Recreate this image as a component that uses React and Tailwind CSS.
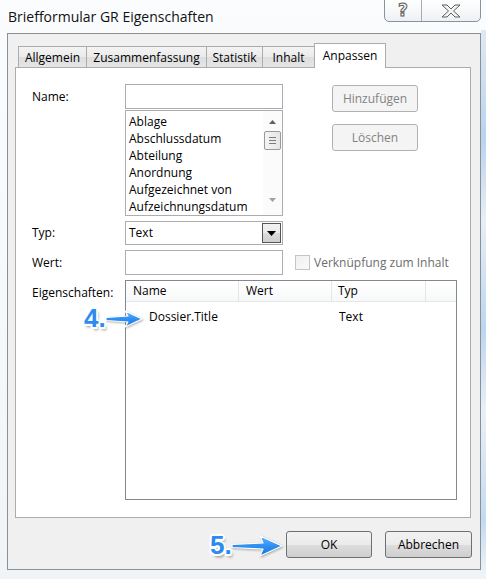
import React from 'react';

const listItems = ['Ablage', 'Abschlussdatum', 'Abteilung', 'Anordnung', 'Aufgezeichnet von', 'Aufzeichnungsdatum'];

const Arrow = ({ w, h, shaft }) => (
  <svg width={w} height={h} viewBox={`0 0 ${w} ${h}`} className="overflow-visible drop-shadow-[1px_1px_1px_rgba(0,0,0,0.3)]">
    <defs>
      <linearGradient id={`ag${w}`} x1="0" y1="0" x2="0" y2="1">
        <stop offset="0" stopColor="#5fb4ff" />
        <stop offset="0.5" stopColor="#2f90f2" />
        <stop offset="1" stopColor="#1673dc" />
      </linearGradient>
    </defs>
    <polygon
      points={`1,${h / 2 - 1.5} ${w - shaft},${h / 2 - 3} ${w - shaft - 3},1 ${w - 1},${h / 2} ${w - shaft - 3},${h - 1} ${w - shaft},${h / 2 + 3} 1,${h / 2 + 1.5}`}
      fill={`url(#ag${w})`}
      stroke="#ffffff"
      strokeWidth="1.2"
      strokeLinejoin="round"
    />
  </svg>
);

const StepNumber = ({ children }) => (
  <span className="font-['Liberation_Sans',Arial,sans-serif] text-[26px] font-bold leading-[26px] text-[#2a8cf0] [text-shadow:-1.5px_-1.5px_0_#fff,1.5px_-1.5px_0_#fff,-1.5px_1.5px_0_#fff,1.5px_1.5px_0_#fff,0_2px_0_#fff,2px_0_0_#fff,-2px_0_0_#fff,0_-2px_0_#fff,2px_3px_3px_rgba(0,0,0,0.45)]">
    {children}
  </span>
);

const WinButton = ({ children, disabled }) => (
  <button
    className={
      disabled
        ? 'h-[27px] w-[86px] rounded-[3px] border border-[#adb2b5] bg-[#f4f4f4] text-[#838383]'
        : 'h-[27px] w-[86px] rounded-[3px] border border-[#707070] bg-[linear-gradient(#f2f2f2_0%,#ebebeb_50%,#dddddd_51%,#cfcfcf_100%)] text-black'
    }
  >
    {children}
  </button>
);

export default function App() {
  return (
    <div className="relative h-[579px] w-[486px] overflow-hidden bg-[linear-gradient(180deg,#fbfcfd_0%,#f1f4f7_100%)] font-['Segoe_UI','Open_Sans',sans-serif] text-[12px] leading-[16px] text-black">
      {/* glass behind the right edge */}
      <div className="absolute right-0 top-[30px] h-[545px] w-[5px] bg-[linear-gradient(180deg,#dfe9f3_0%,#b9d3ee_20%,#e7eef6_35%,#bcd6f0_55%,#e9f0f7_70%,#c2daf1_90%,#eef3f8_100%)]" />

      {/* title bar */}
      <div className="flex h-[33px]">
        <div className="pl-[8px] pt-[7px] text-[14px] leading-[20px] text-[#111]">Briefformular GR Eigenschaften</div>
        <div className="ml-auto mr-[5px] flex h-[23px] -translate-y-px rounded-b-[5px] border border-[#8d9399] bg-[linear-gradient(180deg,#ffffff_0%,#eef1f4_100%)]">
          <div className="flex w-[37px] items-center justify-center border-r border-[#a7acb1]">
            <span className="font-['DejaVu_Sans',sans-serif] text-[17px] font-bold leading-[17px] text-[#f4f4f4] [-webkit-text-stroke:1px_#5c5c5c]">?</span>
          </div>
          <div className="flex w-[58px] items-center justify-center">
            <svg width="20" height="14" viewBox="0 0 20 14">
              <polygon
                points="1,1 6,1 10,5 14,1 19,1 12.5,7 19,13 14,13 10,9 6,13 1,13 7.5,7"
                fill="#f5f5f5"
                stroke="#5f5f5f"
                strokeWidth="1"
                strokeLinejoin="round"
              />
            </svg>
          </div>
        </div>
      </div>

      {/* client area */}
      <div className="ml-[7px] flex h-[537px] w-[474px] flex-col border border-[#8b9096] bg-[#f0f0f0]">
        {/* tabs */}
        <div className="flex h-[33px] items-end pl-[10px] pt-[9px]">
          {[
            ['Allgemein', 'w-[69px]'],
            ['Zusammenfassung', 'w-[121px] -ml-px'],
            ['Statistik', 'w-[57px] -ml-px'],
            ['Inhalt', 'w-[53px] -ml-px'],
          ].map(([t, c]) => (
            <div
              key={t}
              className={`${c} flex h-[21px] items-center justify-center border border-b-0 border-[#acacac] bg-[linear-gradient(180deg,#f3f3f3_0%,#ebebeb_50%,#dedede_51%,#e5e5e5_100%)] pt-px`}
            >
              {t}
            </div>
          ))}
          <div className="relative z-10 -mb-px -ml-px flex h-[25px] w-[72px] items-start justify-center border border-b-0 border-[#acacac] bg-white pt-[4px]">
            Anpassen
          </div>
        </div>

        {/* tab panel */}
        <div className="ml-[7px] h-[451px] w-[456px] border border-[#acacac] bg-white pl-[16px] pt-[16px]">
          {/* Name */}
          <div className="flex">
            <div className="w-[93px] pt-[5px]">Name:</div>
            <div className="flex w-[158px] flex-col">
              <div className="h-[25px] border border-[#abadb3] bg-white" />
              <div className="mt-px flex h-[106px] border border-[#abadb3] bg-white">
                <div className="flex-1 pl-[3px] pt-[2px]">
                  {listItems.map((i) => (
                    <div key={i} className="h-[17px] leading-[17px]">
                      {i}
                    </div>
                  ))}
                </div>
                <div className="flex w-[19px] flex-col items-center bg-[#fbfbfb] pt-[9px]">
                  <svg width="7" height="4" viewBox="0 0 7 4">
                    <polygon points="0,4 3.5,0 7,4" fill="#606060" />
                  </svg>
                  <div className="mt-[7px] flex h-[19px] w-[17px] flex-col items-center justify-center gap-[2px] rounded-[2px] border border-[#9a9a9a] bg-[linear-gradient(90deg,#f4f4f4,#e6e6e6)]">
                    <div className="h-px w-[7px] bg-[#7b7b7b]" />
                    <div className="h-px w-[7px] bg-[#7b7b7b]" />
                    <div className="h-px w-[7px] bg-[#7b7b7b]" />
                  </div>
                  <svg className="mt-[48px]" width="7" height="4" viewBox="0 0 7 4">
                    <polygon points="0,0 3.5,4 7,0" fill="#a0a0a0" />
                  </svg>
                </div>
              </div>
            </div>
            <div className="ml-[49px] flex flex-col gap-[12px] pt-px">
              <WinButton disabled>Hinzufügen</WinButton>
              <WinButton disabled>Löschen</WinButton>
            </div>
          </div>

          {/* Typ */}
          <div className="mt-[5px] flex">
            <div className="flex h-[24px] w-[93px] items-center">Typ:</div>
            <div className="flex h-[24px] w-[158px] items-center border border-[#abadb3] bg-white pl-[3px] pr-px">
              <span className="flex-1">Text</span>
              <div className="flex h-[20px] w-[19px] items-center justify-center border border-[#555] bg-[linear-gradient(180deg,#f2f2f2_0%,#ebebeb_50%,#dcdcdc_51%,#cfcfcf_100%)]">
                <svg width="9" height="5" viewBox="0 0 9 5">
                  <polygon points="0,0 9,0 4.5,5" fill="#000" />
                </svg>
              </div>
            </div>
          </div>

          {/* Wert */}
          <div className="mt-[5px] flex items-center">
            <div className="flex h-[25px] w-[93px] items-center">Wert:</div>
            <div className="h-[25px] w-[158px] border border-[#abadb3] bg-white" />
            <div className="ml-[12px] h-[15px] w-[15px] border border-[#c4c4c4] bg-[linear-gradient(135deg,#f0f0f0,#fafafa)]" />
            <span className="ml-[4px] text-[#6d6d6d]">Verknüpfung zum Inhalt</span>
          </div>

          {/* Eigenschaften */}
          <div className="mt-[5px] flex">
            <div className="w-[93px] pt-[5px]">Eigenschaften:</div>
            <div className="relative h-[220px] w-[332px] border border-[#828790] bg-white">
              <div className="flex h-[21px] border-b border-[#e5e5e5] bg-[linear-gradient(180deg,#ffffff_0%,#f7f8f9_100%)]">
                <div className="flex w-[113px] items-center border-r border-[#e5e5e5] pl-[7px]">Name</div>
                <div className="flex w-[93px] items-center border-r border-[#e5e5e5] pl-[7px]">Wert</div>
                <div className="flex w-[94px] items-center border-r border-[#e5e5e5] pl-[6px]">Typ</div>
              </div>
              <div className="flex pt-[7px]">
                <div className="w-[206px] pl-[23px]">Dossier.Title</div>
                <div className="pl-[7px]">Text</div>
              </div>
            </div>
          </div>
        </div>

        {/* dialog buttons */}
        <div className="flex justify-end gap-[13px] pr-[8px] pt-[13px]">
          <WinButton>OK</WinButton>
          <div className="w-[87px]">
            <button className="h-[27px] w-[87px] rounded-[3px] border border-[#707070] bg-[linear-gradient(#f2f2f2_0%,#ebebeb_50%,#dddddd_51%,#cfcfcf_100%)]">
              Abbrechen
            </button>
          </div>
        </div>
      </div>

      {/* annotations */}
      <div className="absolute left-[84px] top-[305px] flex items-center">
        <StepNumber>4.</StepNumber>
        <div className="-ml-px mt-[2px]">
          <Arrow w={38} h={18} shaft={15} />
        </div>
      </div>
      <div className="absolute left-[210px] top-[532px] flex items-center">
        <StepNumber>5.</StepNumber>
        <div className="-ml-px mt-[2px]">
          <Arrow w={52} h={22} shaft={20} />
        </div>
      </div>
    </div>
  );
}
